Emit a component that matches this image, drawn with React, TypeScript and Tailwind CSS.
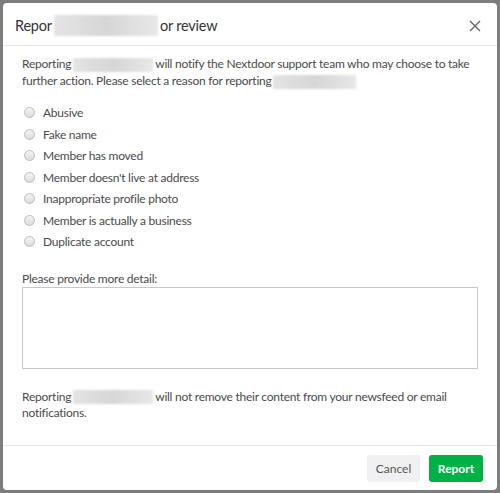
const reasons = [
  "Abusive",
  "Fake name",
  "Member has moved",
  "Member doesn't live at address",
  "Inappropriate profile photo",
  "Member is actually a business",
  "Duplicate account",
];

function Blur({ w, h }: { w: number; h: number }) {
  return (
    <span
      className="mx-[2px] inline-block align-middle bg-gradient-to-r from-[#e4e4e4] via-[#d6d6d6] to-[#e8e8e8] blur-[1px]"
      style={{ width: w, height: h }}
    />
  );
}

export default function App() {
  return (
    <div className="w-[500px] h-[493px] bg-[#7d7d7d] p-[3px] font-['Lato',sans-serif] text-[#4a4a4a]">
      <div className="flex h-full flex-col rounded-[4px] bg-white">
        <div className="flex h-[43px] shrink-0 items-center justify-between border-b border-[#e6e6e6] pl-[12px] pr-[16px] pt-[3px]">
          <h1 className="flex items-center text-[14.5px] tracking-[-0.2px] text-[#333]">
            <span>Repor</span>
            <Blur w={104} h={21} />
            <span>or review</span>
          </h1>
          <svg width="12" height="12" viewBox="0 0 12 12" className="text-[#666]">
            <path d="M1 1L11 11M11 1L1 11" stroke="currentColor" strokeWidth="1.4" />
          </svg>
        </div>
        <div className="flex flex-1 flex-col px-[19px] pt-[9px] text-[12px] leading-[17px] tracking-[-0.25px]">
          <p>
            Reporting<Blur w={80} h={14} />will notify the Nextdoor support team who may choose to take further action. Please select a reason for reporting<Blur w={83} h={14} />
          </p>
          <div className="mt-[15px] flex flex-col gap-[4px]">
            {reasons.map((r) => (
              <label key={r} className="flex h-[17.5px] items-center gap-[8px]">
                <span className="ml-[2px] h-[11px] w-[11px] rounded-full border border-[#bdbdbd] bg-gradient-to-b from-[#f4f4f4] to-[#dcdcdc]" />
                <span>{r}</span>
              </label>
            ))}
          </div>
          <div className="mt-[19px]">Please provide more detail:</div>
          <div className="h-[82px] w-full border border-[#c8c8c8]" />
          <p className="mt-[20px] leading-[16px]">
            Reporting<Blur w={80} h={14} />will not remove their content from your newsfeed or email notifications.
          </p>
        </div>
        <div className="flex h-[45px] shrink-0 items-start justify-end gap-[9px] border-t border-[#e6e6e6] pr-[14px] pt-[9px]">
          <button className="h-[27px] w-[53px] rounded-[3px] bg-[#f0f0f2] text-[12px] text-[#555]">Cancel</button>
          <button className="h-[27px] w-[54px] rounded-[3px] bg-[#00b246] text-[12px] font-bold text-white">Report</button>
        </div>
      </div>
    </div>
  );
}
